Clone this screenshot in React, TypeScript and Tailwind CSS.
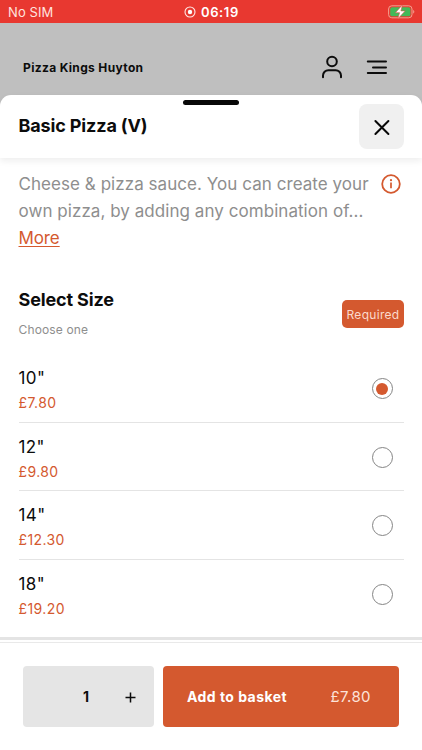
import { useState } from 'react';

interface SizeType {
  id: number;
  label: string;
  price: string;
}

const sizeList: SizeType[] = [
  { id: 1, label: '10"', price: '£7.80' },
  { id: 2, label: '12"', price: '£9.80' },
  { id: 3, label: '14"', price: '£12.30' },
  { id: 4, label: '18"', price: '£19.20' },
];

function StatusBar() {
  return (
    <div className="relative h-[23px] shrink-0 bg-[#e83830] text-white flex items-center justify-between pl-2 pr-[7px]">
      <span className="text-[13px] leading-[23px] pt-px tracking-[0.1px] text-[#ffe3df]">No SIM</span>
      <div className="absolute left-[184px] top-0 h-[24px] flex items-center gap-[5px]">
        <svg width="12" height="12" viewBox="0 0 12 12" fill="none">
          <circle cx="6" cy="6" r="5" stroke="#ffe9e6" strokeWidth="1.1" />
          <circle cx="6" cy="6" r="2.2" fill="#fff" />
        </svg>
        <span className="text-[13px] leading-[24px] font-semibold tracking-[0.6px]">06:19</span>
      </div>
      <svg width="28" height="16" viewBox="0 0 28 16" fill="none">
        <rect x="1.6" y="1.8" width="23.4" height="12" rx="3.2" stroke="#f3a08f" strokeWidth="1" />
        <rect x="3.2" y="3.3" width="20.2" height="9" rx="1.9" fill="#43b958" />
        <path d="M26.2 6v3.6c.7-.3 1.1-1 1.1-1.8s-.4-1.5-1.1-1.8Z" fill="#f3a08f" />
        <path
          d="M15.4 .9 8.4 8.7h4.2l-1.8 6.1L18.2 6.9h-4.3l1.5-6Z"
          fill="#fff"
          stroke="#d8574a"
          strokeWidth="0.6"
        />
      </svg>
    </div>
  );
}

function SiteHeader() {
  return (
    <div className="h-[72px] shrink-0 pt-[17px] pl-[23px] pr-[34px] flex items-center justify-between">
      <span className="text-[12px] font-bold tracking-[0.35px] whitespace-nowrap">Pizza Kings Huyton</span>
      <div className="flex items-center gap-[23px]">
        <svg width="22" height="25" viewBox="0 0 22 25" fill="none" stroke="#0c0c0c" strokeWidth="2" strokeLinecap="round">
          <circle cx="11" cy="6.5" r="4.8" />
          <path d="M2 22.2v-1.6a5.4 5.4 0 0 1 5.4-5.4h7.2a5.4 5.4 0 0 1 5.4 5.4v1.6" />
        </svg>
        <svg width="22" height="16" viewBox="0 0 22 16" fill="none" stroke="#0c0c0c" strokeWidth="2" strokeLinecap="round">
          <path d="M1.8 1.6h18.2M7 7.4h13M1.8 13h18.2" />
        </svg>
      </div>
    </div>
  );
}

export default function App() {
  const [selectedId, setSelectedId] = useState(1);
  const [quantity, setQuantity] = useState(1);

  return (
    <div className="w-[422px] h-[750px] overflow-hidden flex flex-col bg-[#bfbfbf] text-[#0c0c0c] font-['Inter','Liberation_Sans',sans-serif]">
      <StatusBar />
      <SiteHeader />

      <div className="flex-1 min-h-0 flex flex-col bg-white rounded-t-[11px]">
        {/* title bar */}
        <div className="relative h-[63px] shrink-0 pl-[18.5px] pr-[18px] flex items-center justify-between rounded-t-[11px] shadow-[0_3px_7px_rgba(0,0,0,0.07)]">
          <div className="absolute left-[183px] top-[5px] w-[56px] h-[5px] rounded-full bg-[#080808]" />
          <h1 className="pb-[2px] text-[18px] font-bold leading-[24px] tracking-[-0.14px] whitespace-nowrap">Basic Pizza (V)</h1>
          <button className="w-[45px] h-[45px] rounded-[8px] bg-[#f0f0f0] flex items-center justify-center">
            <svg width="18" height="18" viewBox="0 0 18 18" stroke="#080808" strokeWidth="2" strokeLinecap="round">
              <path d="M2.4 3 15.4 16M15.4 3 2.4 16" />
            </svg>
          </button>
        </div>

        {/* description */}
        <div className="pt-[13px] pl-[18.5px] pr-[21px] flex justify-between">
          <p className="text-[17px] leading-[27px] tracking-[0.05px] text-[#8e8e8e] whitespace-nowrap">
            Cheese &amp; pizza sauce. You can create your
            <br />
            own pizza, by adding any combination of...
            <br />
            <a className="text-[#d4592f] underline decoration-1 underline-offset-[2px] tracking-[-0.1px]">More</a>
          </p>
          <svg className="mt-[3px] shrink-0" width="20" height="20" viewBox="0 0 20 20" fill="none">
            <circle cx="10" cy="10" r="8.8" stroke="#d4592f" strokeWidth="1.8" />
            <path d="M10 8.6v5.6" stroke="#d4592f" strokeWidth="1.7" />
            <circle cx="10" cy="6.2" r="1.1" fill="#d4592f" />
          </svg>
        </div>

        {/* size heading */}
        <div className="pt-[35px] pl-[18.5px] pr-[18px] h-[102px] shrink-0 flex justify-between">
          <div>
            <h2 className="text-[18px] font-bold leading-[26px] tracking-[-0.14px] whitespace-nowrap">Select Size</h2>
            <p className="mt-[9px] text-[12px] leading-[16px] tracking-[0.15px] text-[#8e8e8e]">Choose one</p>
          </div>
          <span className="mt-[13px] w-[62px] h-[28px] rounded-[5px] bg-[#d4592f] text-[#fbd9cc] text-[12px] tracking-[0.3px] pt-px flex items-center justify-center">
            Required
          </span>
        </div>

        {/* size options */}
        <div className="pl-[18.5px] pr-[18px]">
          {sizeList.map((size) => (
            <label
              key={size.id}
              className="h-[68.5px] pt-[12px] pr-[11.5px] flex justify-between border-b border-[#e4e4e4] last:border-transparent"
            >
              <span className="flex flex-col">
                <span className="text-[17px] leading-[24px] tracking-[0.4px]">{size.label}</span>
                <span className="text-[14px] leading-[25px] tracking-[0.4px] text-[#d4592f]">{size.price}</span>
              </span>
              <input
                type="radio"
                name="size"
                className="sr-only"
                checked={selectedId === size.id}
                onChange={() => setSelectedId(size.id)}
              />
              <span className="mt-[12px] w-[21px] h-[21px] rounded-full border border-[#858585] flex items-center justify-center">
                {selectedId === size.id && <span className="w-[12px] h-[12px] rounded-full bg-[#d4592f]" />}
              </span>
            </label>
          ))}
        </div>

        {/* basket bar */}
        <div className="mt-auto h-[113px] shrink-0 border-t-[3px] border-[#e4e4e4]">
          <div className="mt-[2px] border-t border-[#e9e9e9] pt-[23px] pl-[23px] pr-[23px] flex justify-between">
            <div className="w-[131px] h-[61px] rounded-[4px] bg-[#e5e5e5] grid grid-cols-[41px_44px_46px] items-center">
              <button className="h-full" onClick={() => setQuantity(Math.max(1, quantity - 1))} />
              <span className="text-[14px] font-bold text-center">{quantity}</span>
              <button className="h-full pt-[2px] pr-[2px] flex items-center justify-center" onClick={() => setQuantity(quantity + 1)}>
                <svg width="11" height="11" viewBox="0 0 11 11" stroke="#0c0c0c" strokeWidth="1.5">
                  <path d="M5.5 .5v10M.5 5.5h10" />
                </svg>
              </button>
            </div>
            <button className="w-[236px] h-[61px] rounded-[4px] bg-[#d4592f] text-white pl-[24px] pr-[28px] flex items-center justify-between whitespace-nowrap">
              <span className="text-[14px] font-bold tracking-[0.45px]">Add to basket</span>
              <span className="pt-px text-[15px] tracking-[0.4px] text-[#fde3d9]">£7.80</span>
            </button>
          </div>
        </div>
      </div>
    </div>
  );
}
